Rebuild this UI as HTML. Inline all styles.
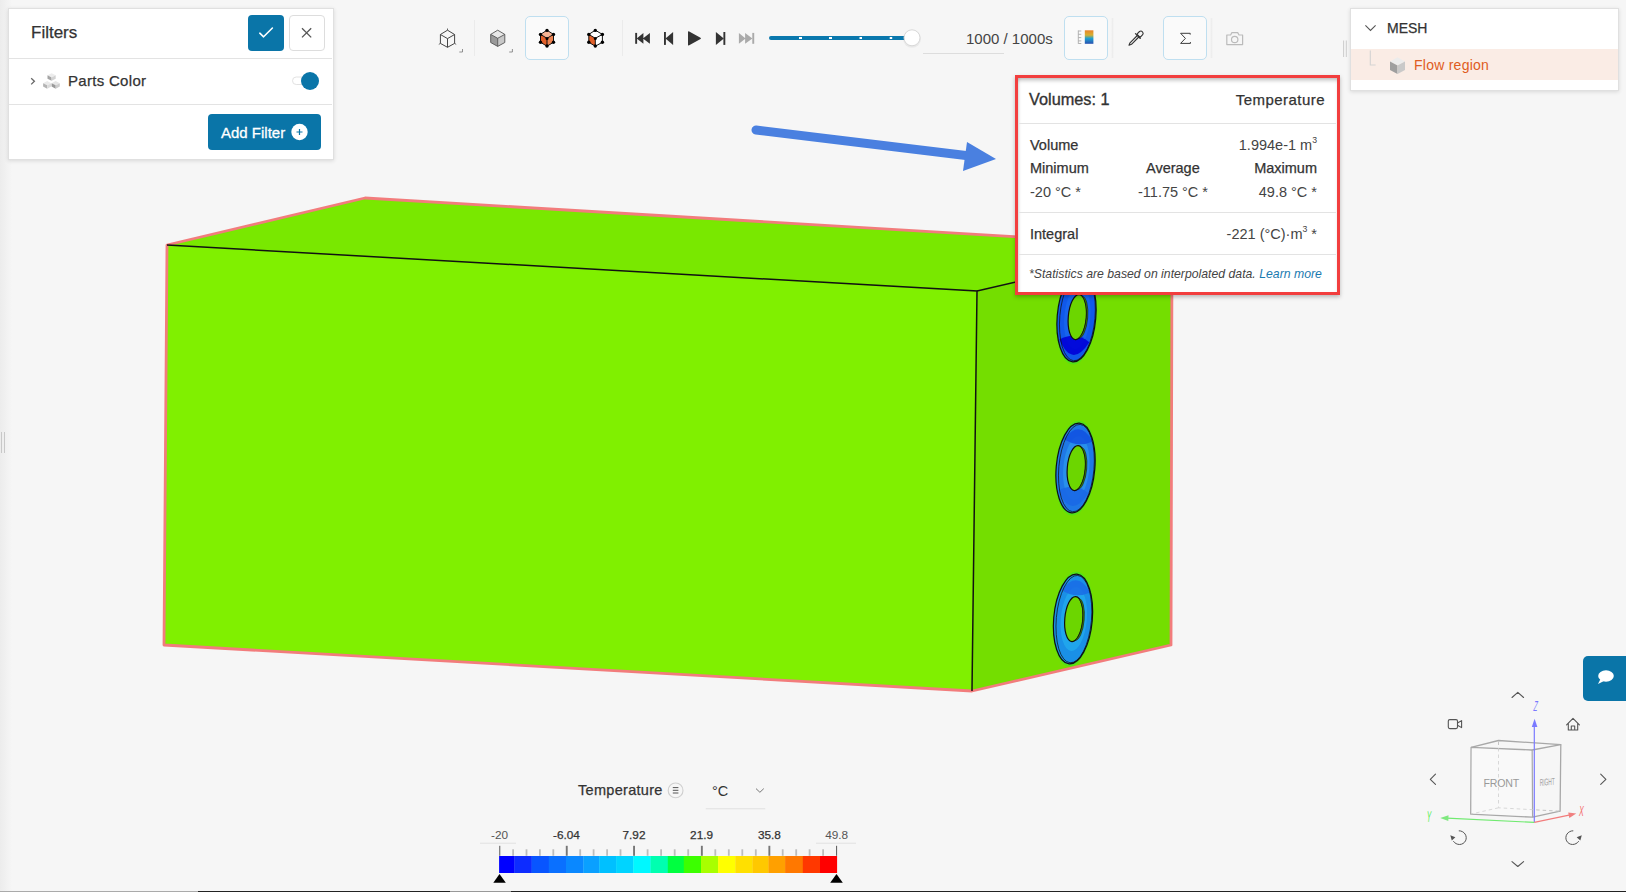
<!DOCTYPE html>
<html><head><meta charset="utf-8">
<style>
*{box-sizing:border-box;margin:0;padding:0}
html,body{width:1626px;height:892px;overflow:hidden;background:#f6f6f6;font-family:"Liberation Sans",sans-serif;color:#333}
.abs{position:absolute}
.t{position:absolute;white-space:nowrap;line-height:1}
#scene{position:absolute;left:0;top:0}
.panel{position:absolute;background:#fff;box-shadow:0 1px 4px rgba(0,0,0,.12);border:1px solid #e0e0e0}
.sep{position:absolute;height:1px;background:#e3e3e3}
.tbox{position:absolute;border:1px solid #bfdff0;background:#fafafa;border-radius:5px}
sup{font-size:60%;vertical-align:top;position:relative;top:-2px}
.sb{-webkit-text-stroke:0.25px #333}
.vsep{position:absolute;width:1px;background:#ebebeb}
</style></head><body>

<svg id="scene" width="1626" height="892" viewBox="0 0 1626 892">
  <!-- 3D box -->
  <polygon points="167,245 365,198 1172,246 977,291" fill="#79e800"/>
  <polygon points="167,245 977,291 972,691 164,645" fill="#80f000"/>
  <polygon points="977,291 1172,246 1171,645 972,691" fill="#74de00"/>
  <polygon points="167,245 365,198 1172,246 1171,645 972,691 164,645" fill="none" stroke="#f27c7c" stroke-width="2.8" stroke-linejoin="round"/>
  <polyline points="167,245 977,291 972,691" fill="none" stroke="#111" stroke-width="1.5"/>
  <polyline points="977,291 1172,246" fill="none" stroke="#111" stroke-width="1.5"/>
  <!-- rings -->
  <g id="rings"><g transform="rotate(5 1076.5 317)">
    <ellipse cx="1076.5" cy="317" rx="20.3" ry="47.5" fill="#30e830" opacity="0.5"/>
    <ellipse cx="1076.5" cy="317" rx="19.3" ry="45" fill="#1058ea" stroke="#111" stroke-width="1.2"/>
    <ellipse cx="1077.3" cy="317" rx="13" ry="32" fill="#1a6cf0" opacity="0.6"/><path d="M1061.5,341 Q1076.5,369 1091.5,341 Q1076.5,331 1061.5,341 Z" fill="#0000d8" opacity="0.9"/><ellipse cx="1077.4" cy="317" rx="17.6" ry="43.8" fill="none" stroke="#111" stroke-width="0.7"/>
    <ellipse cx="1077.3" cy="317" rx="9" ry="22.6" fill="#6cd600" stroke="#111" stroke-width="1.2"/>
    <path d="M1080.5,296 A8.5,22 0 0 1 1080.5,338 A7.2,21 0 0 0 1080.5,296 Z" fill="#4a9a00" stroke="#111" stroke-width="0.6"/>
  </g><g transform="rotate(5 1075.5 468)">
    <ellipse cx="1075.5" cy="468" rx="20.3" ry="47.5" fill="#30e830" opacity="0.5"/>
    <ellipse cx="1075.5" cy="468" rx="19.3" ry="45" fill="#1f78e6" stroke="#111" stroke-width="1.2"/>
    <ellipse cx="1076.3" cy="468" rx="13" ry="32" fill="#2ea0ee" opacity="0.6"/><path d="M1061.5,440 Q1075.5,418 1090.5,440 Q1075.5,448 1061.5,440 Z" fill="#1050e0" opacity="0.85"/><path d="M1060.5,492 Q1075.5,520 1090.5,492 Q1075.5,482 1060.5,492 Z" fill="#1a68e6" opacity="0.9"/><ellipse cx="1076.4" cy="468" rx="17.6" ry="43.8" fill="none" stroke="#111" stroke-width="0.7"/>
    <ellipse cx="1076.3" cy="468" rx="9" ry="22.6" fill="#6cd600" stroke="#111" stroke-width="1.2"/>
    <path d="M1079.5,447 A8.5,22 0 0 1 1079.5,489 A7.2,21 0 0 0 1079.5,447 Z" fill="#4a9a00" stroke="#111" stroke-width="0.6"/>
  </g><g transform="rotate(5 1073 619)">
    <ellipse cx="1073" cy="619" rx="20.3" ry="47.5" fill="#30e830" opacity="0.5"/>
    <ellipse cx="1073" cy="619" rx="19.3" ry="45" fill="#1a90e6" stroke="#111" stroke-width="1.2"/>
    <ellipse cx="1073.8" cy="619" rx="13" ry="32" fill="#24b4f0" opacity="0.6"/><path d="M1059,591 Q1073,569 1088,591 Q1073,599 1059,591 Z" fill="#1a6ce6" opacity="0.85"/><ellipse cx="1073.9" cy="619" rx="17.6" ry="43.8" fill="none" stroke="#111" stroke-width="0.7"/>
    <ellipse cx="1073.8" cy="619" rx="9" ry="22.6" fill="#6cd600" stroke="#111" stroke-width="1.2"/>
    <path d="M1077,598 A8.5,22 0 0 1 1077,640 A7.2,21 0 0 0 1077,598 Z" fill="#4a9a00" stroke="#111" stroke-width="0.6"/>
  </g></g>
  <!-- arrow -->
  <line x1="756" y1="130" x2="970" y2="156" stroke="#4a80e0" stroke-width="9" stroke-linecap="round"/>
  <polygon points="967,142 996,159 963,171" fill="#4a80e0"/>
</svg>

<!-- left handle & bottom line -->
<div class="abs" style="left:0;top:0;width:12px;height:892px;background:linear-gradient(to right,#ececec,#f6f6f6)"></div>
<div class="abs" style="left:1px;top:432px;width:1px;height:21px;background:#c8c8c8"></div>
<div class="abs" style="left:4px;top:432px;width:1px;height:21px;background:#c8c8c8"></div>
<div class="abs" style="left:0;top:891px;width:198px;height:1px;background:#aaa"></div>
<div class="abs" style="left:198px;top:891px;width:252px;height:1px;background:#222"></div>
<div class="abs" style="left:450px;top:891px;width:61px;height:1px;background:#999"></div>
<div class="abs" style="left:511px;top:891px;width:1115px;height:1px;background:#222"></div>
<!-- Toolbar -->
<div class="vsep" style="left:474px;top:20px;height:36px"></div>
<div class="tbox" style="left:525px;top:16px;width:44px;height:44px"></div>
<div class="vsep" style="left:622px;top:20px;height:36px"></div>
<div class="tbox" style="left:1064px;top:16px;width:44px;height:44px"></div>
<div class="abs" style="left:1111px;top:18px;width:3px;height:40px;background:linear-gradient(to right,rgba(0,0,0,0),rgba(0,0,0,.035),rgba(0,0,0,0))"></div>
<div class="tbox" style="left:1163px;top:16px;width:44px;height:44px"></div>
<div class="abs" style="left:1210px;top:18px;width:3px;height:40px;background:linear-gradient(to right,rgba(0,0,0,0),rgba(0,0,0,.035),rgba(0,0,0,0))"></div>
<div class="t" style="left:966px;top:31px;font-size:15px;color:#444">1000 / 1000s</div>
<div class="abs" style="left:923px;top:53px;width:81px;height:1px;background:#ddd"></div>
<svg class="abs" style="left:0;top:0" width="1626" height="70" viewBox="0 0 1626 70">
  <!-- icon1 wire cube -->
  <g fill="none" stroke="#444" stroke-width="1" stroke-linejoin="round">
    <path d="M447.5,30.2 L454.6,34.5 L454.6,43.4 L447.5,47.3 L440.4,43.4 L440.4,34.5 Z M440.4,34.5 L447.5,38.6 L454.6,34.5 M447.5,38.6 L447.5,47.3"/>
    <path d="M447.5,28.5 v1.7 M438.8,44.4 l1.6,-1 M456.2,44.4 l-1.6,-1" stroke-width="0.8"/>
    <path d="M459.3,52 h3.2 v-3" stroke-width="0.8" stroke="#777"/>
  </g>
  <!-- icon2 grey cube -->
  <path d="M497.7,30.2 L504.8,34.4 L497.7,38.3 L490.7,34.4 Z" fill="#e8e8e8"/>
  <path d="M490.7,34.4 L497.7,38.3 L497.7,46.4 L490.7,42.5 Z" fill="#9a9a9a"/>
  <path d="M504.8,34.4 L497.7,38.3 L497.7,46.4 L504.8,42.5 Z" fill="#c8c8c8"/>
  <path d="M497.7,30.2 L504.8,34.4 L504.8,42.5 L497.7,46.4 L490.7,42.5 L490.7,34.4 Z M490.7,34.4 L497.7,38.3 L504.8,34.4 M497.7,38.3 V46.4" fill="none" stroke="#555" stroke-width="0.9" stroke-linejoin="round"/>
  <path d="M509.2,52 h3.2 v-3" fill="none" stroke-width="0.8" stroke="#777"/>
  <!-- icon3 orange cube -->
  <path d="M547,30.2 L553.5,34.4 L547,38.3 L540.5,34.4 Z" fill="#f5b394"/>
  <path d="M540.5,34.4 L547,38.3 L547,46.2 L540.5,42.3 Z" fill="#e2602a"/>
  <path d="M553.5,34.4 L547,38.3 L547,46.2 L553.5,42.3 Z" fill="#ee8350"/>
  <path d="M547,30.2 L553.5,34.4 L553.5,42.3 L547,46.2 L540.5,42.3 L540.5,34.4 Z M540.5,34.4 L547,38.3 L553.5,34.4 M547,38.3 V46.2" fill="none" stroke="#111" stroke-width="1" stroke-linejoin="round"/>
  <g fill="#000"><circle cx="547" cy="30.4" r="1.7"/><circle cx="540.5" cy="34.4" r="1.7"/><circle cx="553.5" cy="34.4" r="1.7"/><circle cx="547" cy="38.5" r="1.5"/><circle cx="540.5" cy="42.3" r="1.7"/><circle cx="553.5" cy="42.3" r="1.7"/><circle cx="547" cy="46" r="1.7"/></g>
  <!-- icon4 -->
  <path d="M595.3,30.2 L602.4,34.4 L595.3,38.3 L588.8,34.4 Z" fill="#fff"/>
  <path d="M588.8,34.4 L595.3,38.3 L595.3,46.2 L588.8,42.3 Z" fill="#e2602a"/>
  <path d="M602.4,34.4 L595.3,38.3 L595.3,46.2 L602.4,42.3 Z" fill="#fff"/>
  <path d="M595.3,30.2 L602.4,34.4 L602.4,42.3 L595.3,46.2 L588.8,42.3 L588.8,34.4 Z M588.8,34.4 L595.3,38.3 L602.4,34.4 M595.3,38.3 V46.2" fill="none" stroke="#111" stroke-width="1" stroke-linejoin="round"/>
  <g fill="#000"><circle cx="595.3" cy="30.4" r="1.7"/><circle cx="588.8" cy="34.4" r="1.7"/><circle cx="602.4" cy="34.4" r="1.7"/><circle cx="595.3" cy="38.5" r="1.5"/><circle cx="588.8" cy="42.3" r="1.7"/><circle cx="602.4" cy="42.3" r="1.7"/><circle cx="595.3" cy="46" r="1.7"/></g>
  <!-- media -->
  <g fill="#333">
    <rect x="635.2" y="32.9" width="1.9" height="10.9"/>
    <path d="M636.7,38.4 L643.4,32.9 V43.8 Z M642.9,38.4 L649.9,32.9 V43.8 Z"/>
    <rect x="664" y="32" width="1.9" height="12.9"/>
    <path d="M665.5,38.5 L673.1,32 V44.9 Z"/>
    <path d="M688,32 Q688,30.8 689.2,31.5 L700.5,37.7 Q701.5,38.4 700.5,39.1 L689.2,45.3 Q688,46 688,44.8 Z"/>
    <rect x="723.4" y="32" width="1.9" height="12.9"/>
    <path d="M723.8,38.5 L715.9,32 V44.9 Z"/>
  </g>
  <g fill="#aaa">
    <path d="M738.9,32.9 L745.6,38.4 L738.9,43.8 Z M745.1,32.9 L752.4,38.4 L745.1,43.8 Z"/>
    <rect x="752.3" y="32.9" width="1.9" height="10.9"/>
  </g>
  <!-- slider -->
  <rect x="769" y="36" width="140" height="4" rx="2" fill="#0a78ad"/>
  <g fill="#fff"><rect x="799" y="37" width="3" height="2"/><rect x="829" y="37" width="3" height="2"/><rect x="859.5" y="37" width="2.5" height="2"/><rect x="889.7" y="37" width="2.5" height="2"/></g>
  <circle cx="912" cy="38.8" r="9" fill="rgba(0,0,0,0.05)"/>
  <circle cx="912" cy="37.8" r="8" fill="#fff" stroke="#d8d8d8" stroke-width="1"/>
  <!-- colorbar icon -->
  <defs><linearGradient id="cbg" x1="0" y1="0" x2="0" y2="1">
    <stop offset="0" stop-color="#e8842a"/><stop offset="0.35" stop-color="#d8b030"/><stop offset="0.6" stop-color="#1ea0d0"/><stop offset="1" stop-color="#2850b0"/></linearGradient></defs>
  <rect x="1084.8" y="30.3" width="8.6" height="13.5" fill="url(#cbg)"/>
  <path d="M1078.3,30.5 V43.7 M1078.3,31 h3 M1078.3,34.3 h3 M1078.3,37.6 h3 M1078.3,40.9 h3 M1078.3,43.5 h3" stroke="#aaa" stroke-width="0.9" fill="none"/>
  <!-- pipette -->
  <g fill="none" stroke="#333" stroke-width="1.1" stroke-linejoin="round" stroke-linecap="round">
    <path d="M1139.5,31.5 a2.3,2.3 0 0 1 3.2,3.2 l-2.6,2.6 l-3.2,-3.2 Z"/>
    <path d="M1135.4,33.6 l4.9,4.9"/>
    <path d="M1137.3,35.5 l-7.3,7.3 l-1,2.5 l2.5,-1 l7.3,-7.3"/>
  </g>
  <!-- sigma -->
  <path d="M1190.2,33.3 H1180.6 L1185.4,38.4 L1180.6,43.4 H1190.4" fill="none" stroke="#333" stroke-width="0.95" stroke-linejoin="miter"/>
  <path d="M1190.2,33.3 v1.3 M1190.4,43.4 v-1.3" stroke="#333" stroke-width="1" fill="none"/>
  <!-- camera -->
  <g fill="none" stroke="#bbb" stroke-width="1.2" stroke-linejoin="round">
    <path d="M1226.8,35 h3.8 l1.3,-2.4 h5.8 l1.3,2.4 h3.6 v9.6 h-15.8 Z"/>
    <circle cx="1234.7" cy="39.5" r="3.2"/>
  </g>
</svg>

<!-- Filters panel -->
<div class="panel" style="left:8px;top:8px;width:326px;height:152px"></div>
<div class="t sb" style="left:31px;top:24px;font-size:17px;color:#333">Filters</div>
<div class="abs" style="left:248px;top:15px;width:36px;height:36px;background:#0a75a8;border-radius:4px"></div>
<div class="abs" style="left:289px;top:15px;width:36px;height:36px;background:#fff;border:1px solid #ddd;border-radius:4px"></div>
<div class="sep" style="left:9px;top:58px;width:323px"></div>
<div class="t sb" style="left:68px;top:73px;font-size:15px;color:#333;letter-spacing:0.3px">Parts Color</div>
<div class="sep" style="left:9px;top:104px;width:323px"></div>
<div class="abs" style="left:208px;top:114px;width:113px;height:36px;background:#0a75a8;border-radius:4px"></div>
<div class="t" style="left:221px;top:125px;font-size:15px;color:#fff;-webkit-text-stroke:0.3px #fff">Add Filter</div>

<!-- Tree panel -->
<div class="panel" style="left:1350px;top:8px;width:269px;height:83px"></div>
<div class="abs" style="left:1351px;top:49px;width:267px;height:31px;background:#faece5"></div>
<div class="t sb" style="left:1387px;top:21px;font-size:14px;color:#333">MESH</div>
<div class="t" style="left:1414px;top:58px;font-size:14px;color:#df5c22;letter-spacing:0.25px">Flow region</div>

<!-- Stats popup -->
<div class="abs" style="left:1015px;top:75px;width:325px;height:220px;border:3px solid #f23e3e;background:#fff;box-shadow:inset 0 4px 4px -2px rgba(0,0,0,.28),inset 3px 0 3px -2px rgba(0,0,0,.12),0 2px 4px rgba(0,0,0,.25)"></div>
<div class="sep" style="left:1018px;top:123px;width:318px"></div>
<div class="sep" style="left:1018px;top:212px;width:318px"></div>
<div class="sep" style="left:1018px;top:254px;width:318px"></div>
<div class="t sb" style="left:1029px;top:91px;font-size:16.3px;-webkit-text-stroke:0.35px #333">Volumes: 1</div>
<div class="t sb" style="right:301px;top:92px;font-size:15px;letter-spacing:0.45px">Temperature</div>
<div class="t sb" style="left:1030px;top:138px;font-size:14.5px">Volume</div>
<div class="t" style="right:309px;top:138px;font-size:14.5px;color:#444">1.994e-1 m<sup>3</sup></div>
<div class="t sb" style="left:1030px;top:161px;font-size:14.5px">Minimum</div>
<div class="t sb" style="left:1146px;top:161px;font-size:14.5px">Average</div>
<div class="t sb" style="right:309px;top:161px;font-size:14.5px">Maximum</div>
<div class="t" style="left:1030px;top:185px;font-size:14.5px;color:#444">-20 °C *</div>
<div class="t" style="left:1138px;top:185px;font-size:14.5px;color:#444">-11.75 °C *</div>
<div class="t" style="right:309px;top:185px;font-size:14.5px;color:#444">49.8 °C *</div>
<div class="t sb" style="left:1030px;top:227px;font-size:14.5px">Integral</div>
<div class="t" style="right:309px;top:227px;font-size:14.5px;color:#444">-221 (°C)·m<sup>3</sup> *</div>
<div class="t" style="left:1029px;top:268px;font-size:12.25px;font-style:italic;color:#444">*Statistics are based on interpolated data. <span style="color:#1a7ab0">Learn more</span></div>

<!-- Legend -->
<div class="t sb" style="left:578px;top:783px;font-size:14.5px;color:#333;letter-spacing:0.3px">Temperature</div>
<!-- Legend svg -->
<svg class="abs" style="left:0;top:760px" width="900" height="132" viewBox="0 760 900 132" font-family="Liberation Sans">
  <rect x="499.1" y="856" width="15.6" height="17" fill="#0000ff"/><rect x="514.4" y="856" width="17.5" height="17" fill="#0d2cff"/><rect x="531.6" y="856" width="17.5" height="17" fill="#0855ff"/><rect x="548.8" y="856" width="17.5" height="17" fill="#0a70ff"/><rect x="566" y="856" width="17.6" height="17" fill="#0a88ff"/><rect x="583.3" y="856" width="16.2" height="17" fill="#0aa0ff"/><rect x="599.2" y="856" width="17.2" height="17" fill="#00c0ff"/><rect x="616.1" y="856" width="17.5" height="17" fill="#00d4ff"/><rect x="633.3" y="856" width="17.5" height="17" fill="#00f8ff"/><rect x="650.5" y="856" width="17.6" height="17" fill="#00ffb0"/><rect x="667.8" y="856" width="16.3" height="17" fill="#00ff40"/><rect x="683.8" y="856" width="17.5" height="17" fill="#3cff00"/><rect x="701" y="856" width="17.4" height="17" fill="#a8ff00"/><rect x="718.1" y="856" width="17.5" height="17" fill="#ffff00"/><rect x="735.3" y="856" width="17.5" height="17" fill="#ffe000"/><rect x="752.5" y="856" width="16.3" height="17" fill="#ffc800"/><rect x="768.5" y="856" width="16.9" height="17" fill="#ffa000"/><rect x="785.1" y="856" width="18.0" height="17" fill="#ff7800"/><rect x="802.8" y="856" width="17.5" height="17" fill="#ff3800"/><rect x="820" y="856" width="17.1" height="17" fill="#ff0000"/>
  <rect x="512.2" y="849.3" width="1.8" height="6.5" fill="#bdbdbd"/><rect x="525.6" y="849.3" width="1.8" height="6.5" fill="#bdbdbd"/><rect x="539.0" y="849.3" width="1.8" height="6.5" fill="#bdbdbd"/><rect x="552.4" y="849.3" width="1.8" height="6.5" fill="#bdbdbd"/><rect x="579.3" y="849.3" width="1.8" height="6.5" fill="#bdbdbd"/><rect x="592.7" y="849.3" width="1.8" height="6.5" fill="#bdbdbd"/><rect x="606.2" y="849.3" width="1.8" height="6.5" fill="#bdbdbd"/><rect x="619.6" y="849.3" width="1.8" height="6.5" fill="#bdbdbd"/><rect x="646.7" y="849.3" width="1.8" height="6.5" fill="#bdbdbd"/><rect x="660.2" y="849.3" width="1.8" height="6.5" fill="#bdbdbd"/><rect x="673.8" y="849.3" width="1.8" height="6.5" fill="#bdbdbd"/><rect x="687.3" y="849.3" width="1.8" height="6.5" fill="#bdbdbd"/><rect x="714.4" y="849.3" width="1.8" height="6.5" fill="#bdbdbd"/><rect x="727.9" y="849.3" width="1.8" height="6.5" fill="#bdbdbd"/><rect x="741.4" y="849.3" width="1.8" height="6.5" fill="#bdbdbd"/><rect x="754.9" y="849.3" width="1.8" height="6.5" fill="#bdbdbd"/><rect x="781.8" y="849.3" width="1.8" height="6.5" fill="#bdbdbd"/><rect x="795.3" y="849.3" width="1.8" height="6.5" fill="#bdbdbd"/><rect x="808.7" y="849.3" width="1.8" height="6.5" fill="#bdbdbd"/><rect x="822.2" y="849.3" width="1.8" height="6.5" fill="#bdbdbd"/><rect x="499.2" y="845.8" width="1.1" height="10" fill="#666"/><rect x="565.8" y="845.8" width="1.9" height="10" fill="#777"/><rect x="633.1" y="845.8" width="1.9" height="10" fill="#777"/><rect x="700.9" y="845.8" width="1.9" height="10" fill="#777"/><rect x="768.4" y="845.8" width="1.9" height="10" fill="#777"/><rect x="836.0" y="845.8" width="1.1" height="10" fill="#666"/>
  <text x="499.5" y="838.6" text-anchor="middle" font-size="11.8" fill="#555">-20</text><text x="566.4" y="838.6" text-anchor="middle" font-size="11.8" fill="#333" stroke="#333" stroke-width="0.25">-6.04</text><text x="634" y="838.6" text-anchor="middle" font-size="11.8" fill="#333" stroke="#333" stroke-width="0.25">7.92</text><text x="701.6" y="838.6" text-anchor="middle" font-size="11.8" fill="#333" stroke="#333" stroke-width="0.25">21.9</text><text x="769.4" y="838.6" text-anchor="middle" font-size="11.8" fill="#333" stroke="#333" stroke-width="0.25">35.8</text><text x="836.7" y="838.6" text-anchor="middle" font-size="11.8" fill="#555">49.8</text>
  <rect x="480" y="842.7" width="36" height="1" fill="#e2e2e2"/>
  <rect x="816" y="842.7" width="40" height="1" fill="#e2e2e2"/>
  <path d="M493.3,882.7 L499.5,874.1 L505.8,882.7 Z" fill="#000"/>
  <path d="M830.2,882.7 L836.5,874.1 L842.8,882.7 Z" fill="#000"/>
  <circle cx="675.6" cy="790.4" r="7.4" fill="none" stroke="#cfcfcf" stroke-width="1.1"/>
  <path d="M672.8,787.6 h5.6 M672.8,790.3 h5.6 M672.8,793 h5.6" stroke="#555" stroke-width="1"/>
  <path d="M756,788.6 L759.9,792.3 L763.8,788.6" fill="none" stroke="#777" stroke-width="1"/>
  <rect x="705.7" y="808.3" width="59.6" height="1" fill="#e0e0e0"/>
</svg>
<div class="t" style="left:712px;top:784px;font-size:14.5px;color:#333">°C</div>


<!-- filter panel icons -->
<svg class="abs" style="left:0;top:0" width="340" height="170" viewBox="0 0 340 170">
  <path d="M259.8,33.2 L263.6,36.8 L272.4,28" fill="none" stroke="#fff" stroke-width="1.6" stroke-linecap="round" stroke-linejoin="round"/>
  <path d="M302,28.2 L311.2,37.4 M311.2,28.2 L302,37.4" fill="none" stroke="#555" stroke-width="1.3"/>
  <path d="M31.2,78.2 L34.4,81.3 L31.2,84.4" fill="none" stroke="#666" stroke-width="1.3"/>
  <!-- parts cubes -->
  <path d="M51.6,73.2 L55.7,75.3 L51.6,77.4 L47.5,75.3 Z" fill="#ececec"/><path d="M47.5,75.3 L51.6,77.4 V80.8 L47.5,78.7 Z" fill="#a4a4a4"/><path d="M55.7,75.3 L51.6,77.4 V80.8 L55.7,78.7 Z" fill="#d2d2d2"/><path d="M47.2,81.1 L51.300000000000004,83.19999999999999 L47.2,85.3 L43.1,83.19999999999999 Z" fill="#eaeaea"/><path d="M43.1,83.19999999999999 L47.2,85.3 V88.69999999999999 L43.1,86.6 Z" fill="#b4b4b4"/><path d="M51.300000000000004,83.19999999999999 L47.2,85.3 V88.69999999999999 L51.300000000000004,86.6 Z" fill="#dadada"/><path d="M55.7,81.1 L59.800000000000004,83.19999999999999 L55.7,85.3 L51.6,83.19999999999999 Z" fill="#e6e6e6"/><path d="M51.6,83.19999999999999 L55.7,85.3 V88.69999999999999 L51.6,86.6 Z" fill="#9a9a9a"/><path d="M59.800000000000004,83.19999999999999 L55.7,85.3 V88.69999999999999 L59.800000000000004,86.6 Z" fill="#cccccc"/>
  <!-- toggle -->
  <rect x="292.5" y="77" width="14" height="7.5" rx="3.75" fill="#fff" stroke="#e2e2e2" stroke-width="1"/>
  <circle cx="310" cy="81" r="9" fill="#0a75a8"/>
  <!-- add filter plus -->
  <circle cx="299.5" cy="132" r="8.2" fill="#fff"/>
  <path d="M296.5,132 h6 M299.5,129 v6" stroke="#0a75a8" stroke-width="1.2"/>
</svg>

<!-- tree icons -->
<svg class="abs" style="left:1330px;top:0" width="296" height="100" viewBox="1330 0 296 100">
  <path d="M1365.4,25.4 L1370.5,30.5 L1375.6,25.4" fill="none" stroke="#555" stroke-width="1.1"/>
  <path d="M1343.6,40.5 v16.5 M1346.3,40.5 v16.5" stroke="#ccc" stroke-width="1"/>
  <path d="M1370.3,50.5 V65 H1375.6" fill="none" stroke="#d3d3d3" stroke-width="1.1"/>
  <path d="M1397.5,57.2 L1405,61.4 L1397.5,65.4 L1390,61.4 Z" fill="#ececec"/>
  <path d="M1390,61.4 L1397.5,65.4 V74 L1390,70 Z" fill="#9f9f9f"/>
  <path d="M1405,61.4 L1397.5,65.4 V74 L1405,70 Z" fill="#c9c9c9"/>
</svg>

<!-- nav cube -->
<svg class="abs" style="left:1400px;top:680px" width="226" height="212" viewBox="1400 680 226 212" font-family="Liberation Sans">
  <g fill="none" stroke="#555" stroke-width="1.1" stroke-linecap="round" stroke-linejoin="round">
    <path d="M1512,697.5 L1517.8,692.3 L1523.6,697.5"/>
    <path d="M1512,861.6 L1517.8,866.5 L1523.6,861.6"/>
    <path d="M1435.5,774.2 L1430.3,779.3 L1435.5,784.3"/>
    <path d="M1600.7,774.2 L1605.9,779.3 L1600.7,784.3"/>
    <rect x="1448.3" y="719.6" width="9.2" height="9" rx="1.5"/>
    <path d="M1457.5,723 L1461.6,720.6 V727.6 L1457.5,725.2"/>
    <path d="M1566.6,724.8 L1573,718.4 L1579.4,724.8 M1568.3,723.4 V730 H1577.7 V723.4 M1571.3,730 V726 H1574.7 V730"/>
    <path d="M1459.2,830.8 A6.9,6.9 0 1 1 1453.6,841.5" stroke-width="1"/>
    <path d="M1572.9,830.8 A6.9,6.9 0 1 0 1578.5,841.5" stroke-width="1"/>
  </g>
  <path d="M1450.3,835.2 L1455.4,837.2 L1451.8,840.6 Z" fill="#555"/>
  <path d="M1581.8,835.2 L1576.7,837.2 L1580.3,840.6 Z" fill="#555"/>
  <!-- cube -->
  <g fill="none" stroke="#a8a8a8" stroke-width="1.3" stroke-linejoin="round">
    <path d="M1471.1,747.3 L1532.1,750 L1532.6,817.2 L1470.7,814.1 Z"/>
    <path d="M1471.1,747.3 L1498.5,740.5 L1560.8,744.6 L1532.1,750"/>
    <path d="M1560.8,744.6 L1560.1,811.2 L1532.6,817.2"/>
  </g>
  <g fill="none" stroke="#c4c4c4" stroke-width="1" stroke-dasharray="3.5,3">
    <path d="M1498.5,741.5 V807.8 L1560.1,811.2 M1498.5,807.8 L1470.7,814.1"/>
  </g>
  <path d="M1471.6,748.2 L1531.6,751 L1532,816.3 L1471.6,813.4 Z" fill="rgba(255,255,255,0.35)"/>
  <text x="1501.3" y="786.6" text-anchor="middle" font-size="10.6" fill="#999" letter-spacing="-0.2">FRONT</text>
  <text x="0" y="0" font-size="8.6" fill="#999" transform="translate(1539.8,786) skewY(-5) scale(0.56,1.15)">RIGHT</text>
  <!-- axes -->
  <path d="M1534.3,822.4 V724" stroke="#7a7aff" stroke-width="1.2"/>
  <path d="M1531.8,727 L1534.6,718.8 L1537.4,727 Z" fill="#7a7aff"/>
  <text x="0" y="0" text-anchor="middle" font-size="9" fill="#7a7aff" transform="translate(1534.8,711.3) skewX(-10) scale(0.7,1.6)">Z</text>
  <path d="M1534.3,822.4 L1447,818.2" stroke="#70ea70" stroke-width="1.2"/>
  <path d="M1448.5,815.3 L1440.2,817.9 L1448.3,821 Z" fill="#80e880"/>
  <text x="0" y="0" text-anchor="middle" font-size="9" fill="#55ee55" transform="translate(1428.4,821.5) skewX(-6) scale(0.75,1.75)">Y</text>
  <path d="M1534.3,822.4 L1569,815.1" stroke="#f27c7c" stroke-width="1.2"/>
  <path d="M1568.2,812.4 L1576.3,813.6 L1569.3,817.9 Z" fill="#f08080"/>
  <text x="0" y="0" text-anchor="middle" font-size="9" fill="#f46a6a" transform="translate(1581,815.6) skewX(-6) scale(0.75,1.6)">X</text>
</svg>
<!-- chat -->
<div class="abs" style="left:1583px;top:656px;width:50px;height:45px;background:#0a75a8;border-radius:5px"></div>
<svg class="abs" style="left:1590px;top:660px" width="30" height="30" viewBox="1590 660 30 30">
  <ellipse cx="1606" cy="676" rx="7.8" ry="5.7" fill="#fff"/>
  <path d="M1600.5,679 L1598,684 L1603.5,681.2 Z" fill="#fff"/>
</svg>

</body></html>
